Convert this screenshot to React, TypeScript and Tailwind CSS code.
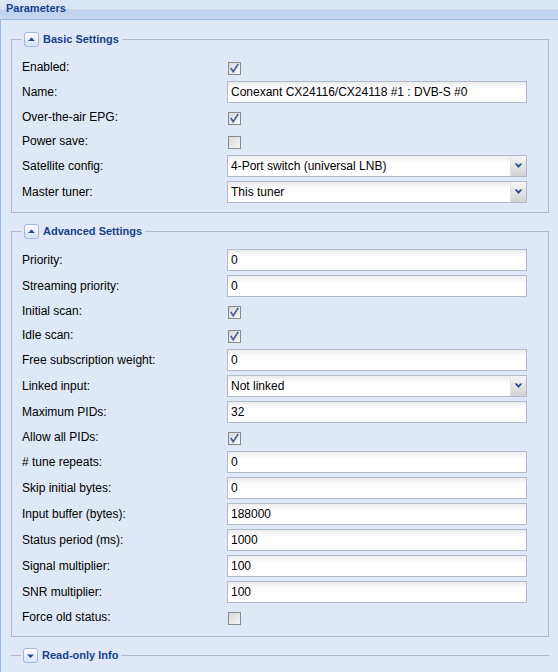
import React from "react";

type Field =
  | { kind: "check"; label: string; checked: boolean }
  | { kind: "text"; label: string; value: string }
  | { kind: "select"; label: string; value: string };

const basic: Field[] = [
  { kind: "check", label: "Enabled:", checked: true },
  { kind: "text", label: "Name:", value: "Conexant CX24116/CX24118 #1 : DVB-S #0" },
  { kind: "check", label: "Over-the-air EPG:", checked: true },
  { kind: "check", label: "Power save:", checked: false },
  { kind: "select", label: "Satellite config:", value: "4-Port switch (universal LNB)" },
  { kind: "select", label: "Master tuner:", value: "This tuner" },
];

const advanced: Field[] = [
  { kind: "text", label: "Priority:", value: "0" },
  { kind: "text", label: "Streaming priority:", value: "0" },
  { kind: "check", label: "Initial scan:", checked: true },
  { kind: "check", label: "Idle scan:", checked: true },
  { kind: "text", label: "Free subscription weight:", value: "0" },
  { kind: "select", label: "Linked input:", value: "Not linked" },
  { kind: "text", label: "Maximum PIDs:", value: "32" },
  { kind: "check", label: "Allow all PIDs:", checked: true },
  { kind: "text", label: "# tune repeats:", value: "0" },
  { kind: "text", label: "Skip initial bytes:", value: "0" },
  { kind: "text", label: "Input buffer (bytes):", value: "188000" },
  { kind: "text", label: "Status period (ms):", value: "1000" },
  { kind: "text", label: "Signal multiplier:", value: "100" },
  { kind: "text", label: "SNR multiplier:", value: "100" },
  { kind: "check", label: "Force old status:", checked: false },
];

function CheckBox({ checked }: { checked: boolean }) {
  return (
    <svg width="13" height="13" viewBox="0 0 13 13" className="ml-[1px] mt-[5px] self-start">
      <defs>
        <linearGradient id="cbg" x1="0" y1="0" x2="1" y2="1">
          <stop offset="0" stopColor="#d9d9d9" />
          <stop offset="1" stopColor="#f7f7f7" />
        </linearGradient>
      </defs>
      <rect x="0.5" y="0.5" width="12" height="12" fill="url(#cbg)" stroke="#8b8b8b" />
      {checked && (
        <path d="M3.2 6.6 L5.2 9.6 L9.8 2.6" fill="none" stroke="#4a5f91" strokeWidth="1.7" strokeLinecap="square" />
      )}
    </svg>
  );
}

function TextBox({ value }: { value: string }) {
  return (
    <div className="w-[300px] h-[22px] border border-[#b5b8c8] bg-linear-to-b from-[#ececec] to-white to-[35%] pl-[3px] flex items-center text-[12px] text-black">
      {value}
    </div>
  );
}

function SelectBox({ value }: { value: string }) {
  return (
    <div className="w-[300px] h-[22px] border border-[#b5b8c8] bg-linear-to-b from-[#ececec] to-white to-[35%] flex items-stretch text-[12px] text-black">
      <div className="flex-1 pl-[3px] flex items-center">{value}</div>
      <div className="w-[16px] border-l border-[#e2e2e2] bg-linear-to-b from-[#f6f6f6] to-[#d3d3d3] flex items-center justify-center">
        <svg width="9" height="6" viewBox="0 0 9 6">
          <path d="M0.5 0.5 L3 0.5 L4.5 2.2 L6 0.5 L8.5 0.5 L4.5 5 Z" fill="#2f4f8c" />
        </svg>
      </div>
    </div>
  );
}

function Row({ f }: { f: Field }) {
  const tall = f.kind !== "check";
  return (
    <div className={`flex ${tall ? "h-[22px] items-center" : "h-[20px] items-start"}`}>
      <div className={`w-[205px] text-[12px] text-black ${tall ? "" : "pt-[1px]"}`}>{f.label}</div>
      {f.kind === "check" && <CheckBox checked={f.checked} />}
      {f.kind === "text" && <TextBox value={f.value} />}
      {f.kind === "select" && <SelectBox value={f.value} />}
    </div>
  );
}

function ToolButton({ up }: { up: boolean }) {
  return (
    <svg width="15" height="15" viewBox="0 0 15 15" className="block">
      <defs>
        <linearGradient id="tbg" x1="0" y1="0" x2="0" y2="1">
          <stop offset="0" stopColor="#ffffff" />
          <stop offset="1" stopColor="#d6e3f5" />
        </linearGradient>
      </defs>
      <rect x="0.5" y="0.5" width="14" height="14" rx="2.5" fill="url(#tbg)" stroke="#9cb8e0" />
      {up ? (
        <path d="M4 9 L7.5 5.5 L11 9 Z" fill="#1d4b9a" />
      ) : (
        <path d="M4 6.5 L7.5 10 L11 6.5 Z" fill="#1d4b9a" />
      )}
    </svg>
  );
}

function Legend({ title, up }: { title: string; up: boolean }) {
  return (
    <legend className="h-[16px] px-[2px] pr-[3px] flex items-center gap-[4px]">
      <ToolButton up={up} />
      <span className="text-[11px] font-bold text-[#15428b] leading-none">{title}</span>
    </legend>
  );
}

function Section({ title, fields }: { title: string; fields: Field[] }) {
  return (
    <fieldset className="border border-[#b5b8c8] px-[10px] pt-[10px] pb-[5px] mb-[10px]">
      <Legend title={title} up />
      <div className="flex flex-col gap-[4px] pb-[4px]">
        {fields.map((f) => (
          <Row key={f.label} f={f} />
        ))}
      </div>
    </fieldset>
  );
}

export default function App() {
  return (
    <div className="w-[558px] h-[672px] overflow-hidden bg-[#dfe8f6] font-['Liberation_Sans',Arial,sans-serif]">
      <div className="h-[20px] border-b border-[#99bbe8] bg-[linear-gradient(to_bottom,#dbe6f5_0%,#d9e4f4_48%,#bed2ee_52%,#c4d7f0_100%)] pl-[6px] flex items-center pb-[2px]">
        <span className="text-[11px] font-bold text-[#15428b]">Parameters</span>
      </div>
      <div className="border-l border-[#99bbe8] pl-[10px] pr-[9px] pt-[11px] h-[652px]">
        <Section title="Basic Settings" fields={basic} />
        <Section title="Advanced Settings" fields={advanced} />
        <fieldset className="border-t border-[#b5b8c8] px-[10px]">
          <Legend title="Read-only Info" up={false} />
        </fieldset>
      </div>
    </div>
  );
}
